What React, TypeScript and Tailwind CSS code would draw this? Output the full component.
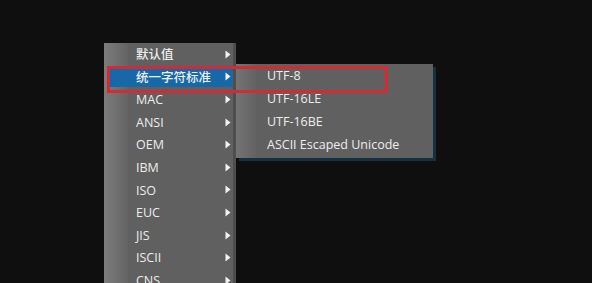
import React from "react";

const mainItems = ["默认值", "统一字符标准", "MAC", "ANSI", "OEM", "IBM", "ISO", "EUC", "JIS", "ISCII", "CNS"];
const subItems = ["UTF-8", "UTF-16LE", "UTF-16BE", "ASCII Escaped Unicode"];

function Arrow() {
  return (
    <svg width="6" height="9" viewBox="0 0 6 9" className="shrink-0">
      <path d="M0.5 0.5 L5.5 4.5 L0.5 8.5 Z" fill="#f2f2f2" />
    </svg>
  );
}

export default function App() {
  return (
    <div
      className="relative w-[592px] h-[283px] overflow-hidden bg-[#0f0f0f]"
      style={{ fontFamily: '"Open Sans", "Noto Sans CJK SC", sans-serif' }}
    >
      {/* main menu */}
      <div className="absolute left-[104px] top-[43px] w-[132px] h-[280px] bg-[#606060] border-r-[3px] border-[#4e4e4e] flex">
        <div className="w-[24px] shrink-0 bg-gradient-to-r from-[#7c7c7c] to-[#646464]" />
        <div className="flex-1 flex flex-col">
          {mainItems.map((t, i) => (
            <div key={t} className="h-[22.6px] shrink-0 relative flex items-center">
              {i === 1 && (
                <div className="absolute left-[-18px] right-0 top-[2px] bottom-[1px] bg-[#1668a8]" />
              )}
              <span className="relative ml-[8px] mt-[2px] flex-1 text-[12.5px] font-medium text-[#ededed] leading-none">{t}</span>
              <span className="relative mr-[2px]"><Arrow /></span>
            </div>
          ))}
        </div>
      </div>

      {/* submenu */}
      <div className="absolute left-[236px] top-[64px] w-[197px] h-[94px] bg-[#606060] shadow-[3px_3px_0_0_#15303f] flex">
        <div className="w-[20px] shrink-0 bg-gradient-to-r from-[#747474] to-[#626262]" />
        <div className="flex-1 flex flex-col">
          {subItems.map((t) => (
            <div key={t} className="h-[23px] flex items-center">
              <span className="ml-[11px] mt-[2px] text-[12.5px] font-medium text-[#ededed] leading-none">{t}</span>
            </div>
          ))}
        </div>
      </div>

      {/* red highlight box */}
      <div className="absolute left-[107px] top-[66px] w-[281px] h-[27px] border-[3px] border-[#d42a36]" />
    </div>
  );
}
